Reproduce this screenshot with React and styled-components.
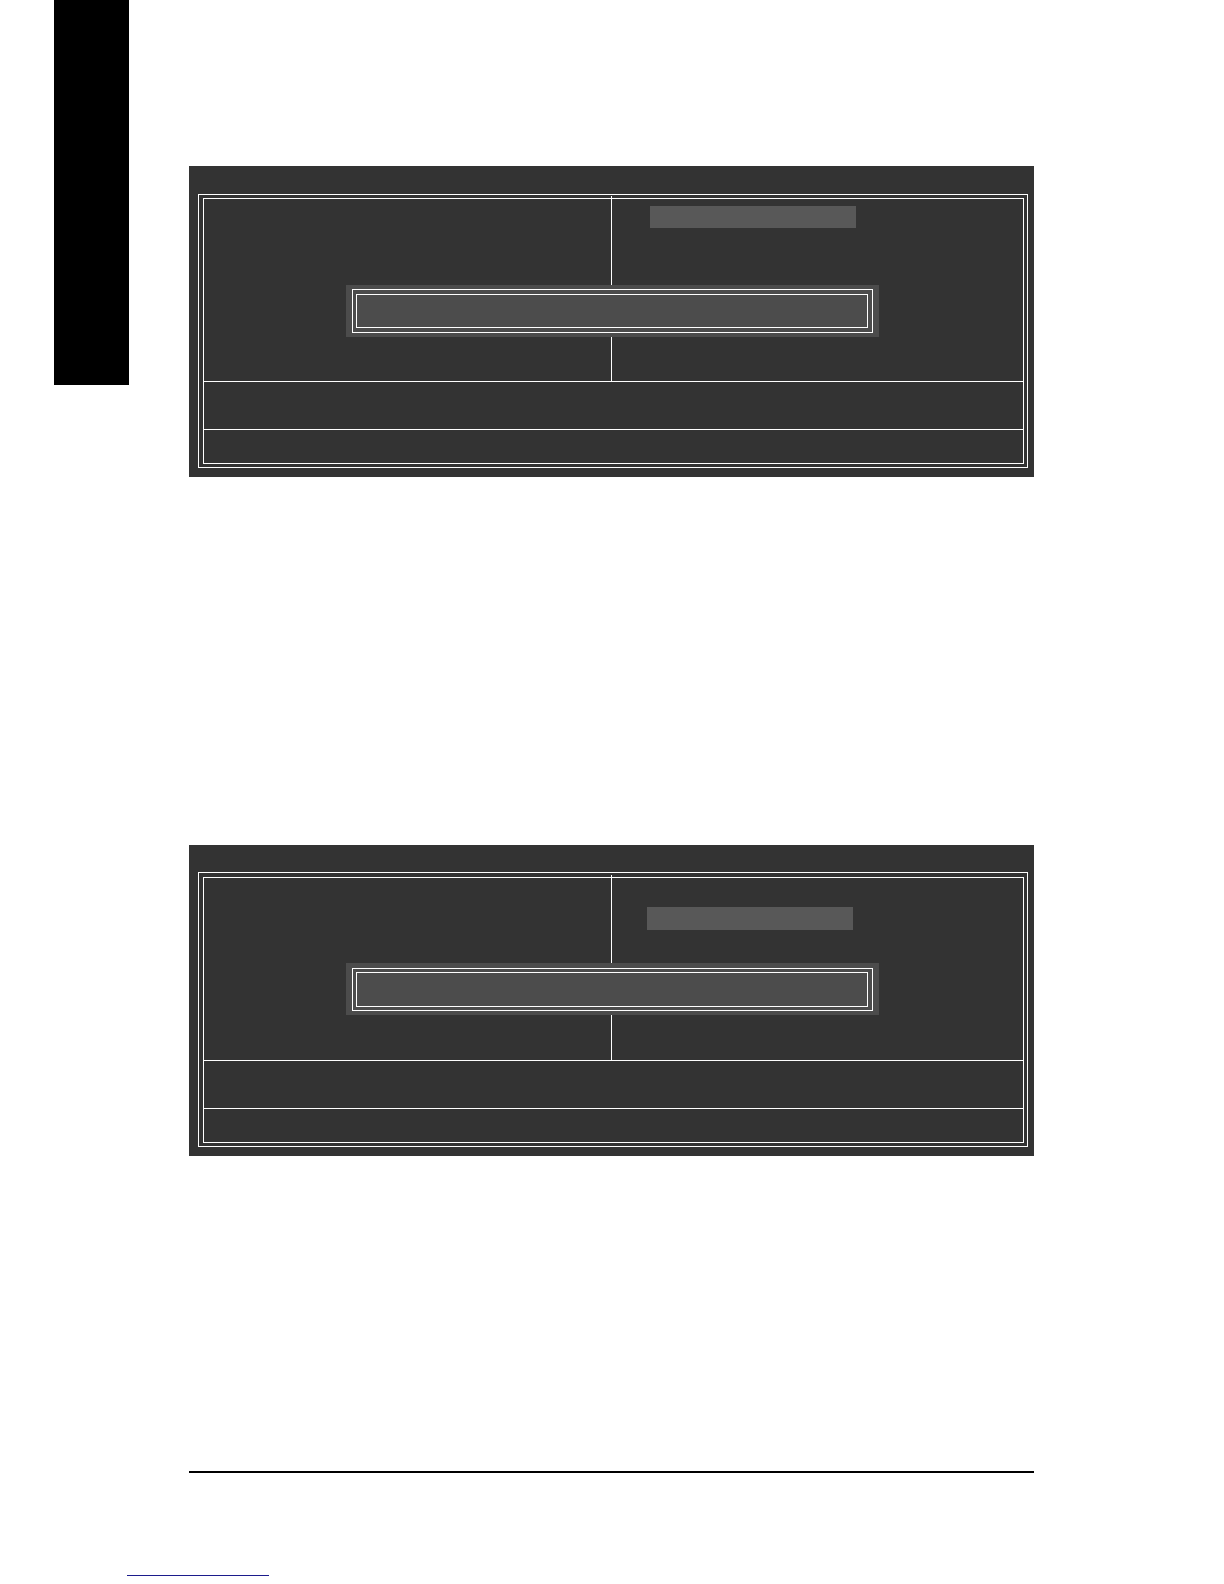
import styled, { createGlobalStyle } from "styled-components";

const App = () => {
    return (
        <>
            <GlobalStyle />
            <Page>
                <Body>
                    <ChapterTab />
                    <Main>
                        <SetupScreen
                            titleHeight={28}
                            frameGap={3}
                            dialog={{ top: 86, height: 34, gap: "4px 4px 4px 3px", padding: "4px 6px" }}
                            selection={{ top: 10, left: 38, height: 22 }}
                        />
                        <SetupScreen
                            titleHeight={27}
                            frameGap={4}
                            dialog={{ top: 85, height: 35, gap: "3px 4px 3px 3px", padding: "5px 6px 4px" }}
                            selection={{ top: 32, left: 35, height: 23 }}
                        />
                    </Main>
                </Body>
                <Footer>
                    <Rule />
                    <Underline />
                </Footer>
            </Page>
        </>
    );
};

const SetupScreen = ({ titleHeight, frameGap, dialog, selection }) => {
    return (
        <Screen $top={titleHeight}>
            <OuterFrame $gap={frameGap}>
                <InnerFrame>
                    <Columns>
                        <LeftColumn />
                        <RightColumn $top={selection.top} $left={selection.left}>
                            <Selection $height={selection.height} />
                        </RightColumn>
                    </Columns>
                    <KeyHelp />
                    <ItemHelp />
                    <Dialog $top={dialog.top} $padding={dialog.padding}>
                        <DialogOuter $gap={dialog.gap}>
                            <DialogInner $height={dialog.height} />
                        </DialogOuter>
                    </Dialog>
                </InnerFrame>
            </OuterFrame>
        </Screen>
    );
};

const GlobalStyle = createGlobalStyle`
    * {
        box-sizing: border-box;
    }

    body {
        margin: 0;
        background: #fff;
        font-family: "Liberation Sans", Arial, sans-serif;
    }
`;

const Page = styled.div`
    display: flex;
    flex-direction: column;
    min-height: 100vh;
`;

const Body = styled.div`
    display: flex;
    align-items: flex-start;
    padding: 0 190px 0 54px;
`;

const ChapterTab = styled.aside`
    flex: 0 0 75px;
    height: 385px;
    background: #000;
`;

const Main = styled.main`
    flex: 1;
    min-width: 0;
    display: flex;
    flex-direction: column;
    gap: 368px;
    margin-left: 60px;
    padding-top: 166px;
`;

const Screen = styled.section`
    padding: ${(props) => props.$top}px 6px 9px 9px;
    background: #333;
`;

/* the double border is one pixel wider on the left side */
const OuterFrame = styled.div`
    padding: ${(props) => props.$gap}px 3px 3px 4px;
    border: 1px solid #fff;
`;

const InnerFrame = styled.div`
    position: relative;
    border: 1px solid #fff;
`;

/* the divider runs up through the frame line */
const Columns = styled.div`
    display: grid;
    grid-template-columns: 408fr 411fr;
    min-height: 186px;
    margin-top: -3px;
    border-bottom: 1px solid #fff;
`;

const LeftColumn = styled.div`
    border-right: 1px solid #fff;
`;

const RightColumn = styled.div`
    padding: ${(props) => props.$top}px 0 0 ${(props) => props.$left}px;
`;

const Selection = styled.div`
    max-width: 206px;
    height: ${(props) => props.$height}px;
    background: #585858;
`;

const KeyHelp = styled.div`
    min-height: 48px;
    border-bottom: 1px solid #fff;
`;

const ItemHelp = styled.div`
    min-height: 33px;
`;

const Dialog = styled.div`
    position: absolute;
    top: ${(props) => props.$top}px;
    left: 142px;
    right: 144px;
    padding: ${(props) => props.$padding};
    background: #4c4c4c;
`;

const DialogOuter = styled.div`
    padding: ${(props) => props.$gap};
    border: 1px solid #fff;
`;

const DialogInner = styled.div`
    min-height: ${(props) => props.$height}px;
    border: 1px solid #fff;
`;

const Footer = styled.footer`
    padding: 315px 190px 8px 127px;
`;

const Rule = styled.hr`
    height: 2px;
    margin: 0 0 102px 62px;
    border: 0;
    background: #000;
`;

const Underline = styled.div`
    width: 142px;
    height: 1px;
    background: #1c1c8c;
`;

export default App;
